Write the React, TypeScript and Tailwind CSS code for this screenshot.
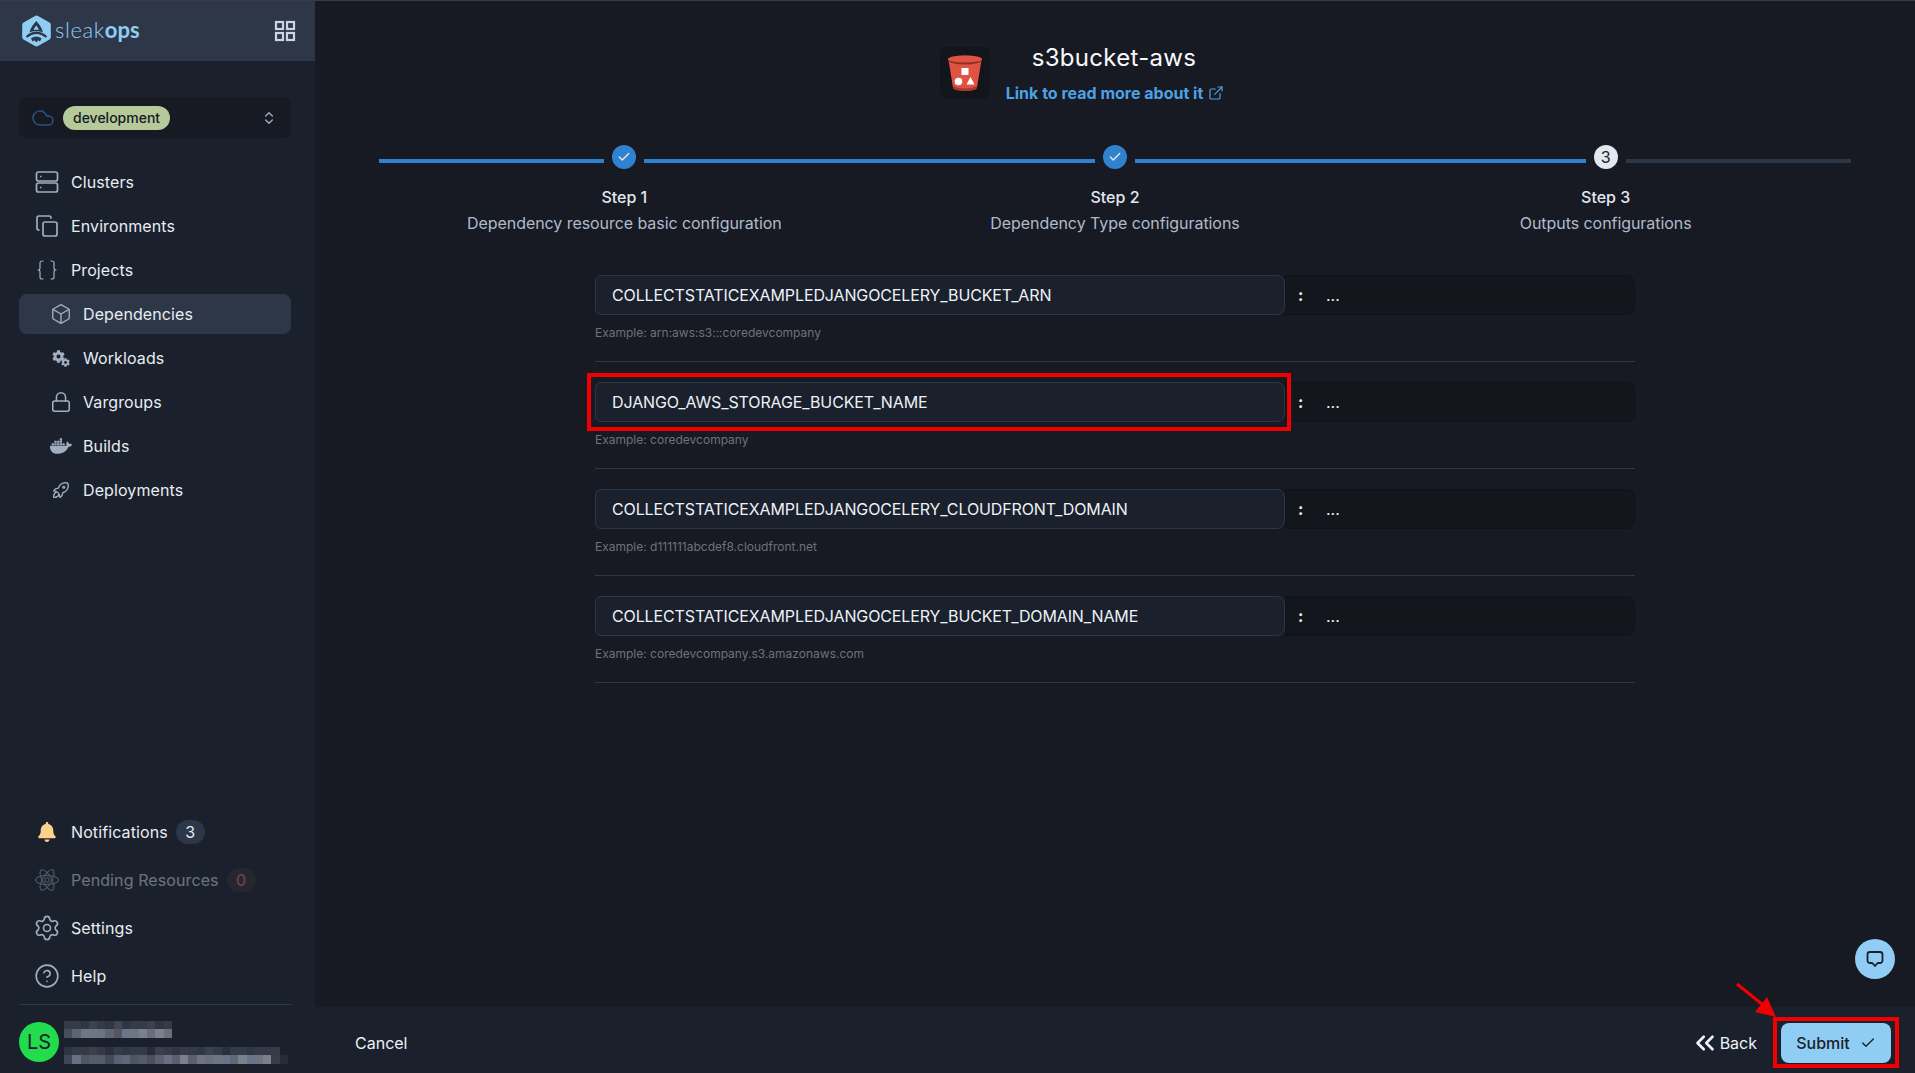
import { Cloud, ChevronsUpDown, Copy, Braces, Box, Lock, Settings, CircleHelp, ExternalLink, Check, ChevronsLeft } from "lucide-react";
import { FaCog, FaDocker, FaBell } from "react-icons/fa";
import { TbRocket } from "react-icons/tb";

function ServerIcon() {
  return (
    <svg width="24" height="24" viewBox="0 0 24 24" fill="none" stroke="currentColor" strokeWidth="1.7">
      <rect x="1.5" y="2" width="21" height="9" rx="2" />
      <rect x="1.5" y="13" width="21" height="9" rx="2" />
      <path d="M5 6.5h1.5M5 17.5h1.5" />
    </svg>
  );
}

function GridIcon() {
  return (
    <svg width="22" height="22" viewBox="0 0 22 22" fill="none" stroke="#cbd5e0" strokeWidth="2.2">
      <rect x="2" y="2" width="7" height="7" />
      <rect x="13" y="2" width="7" height="7" />
      <rect x="2" y="13" width="7" height="7" />
      <rect x="13" y="13" width="7" height="7" />
    </svg>
  );
}

function AtomIcon() {
  return (
    <svg width="24" height="24" viewBox="0 0 24 24" fill="none" stroke="currentColor" strokeWidth="1.1">
      <ellipse cx="12" cy="12" rx="11.5" ry="4.5" />
      <ellipse cx="12" cy="12" rx="11.5" ry="4.5" transform="rotate(60 12 12)" />
      <ellipse cx="12" cy="12" rx="11.5" ry="4.5" transform="rotate(120 12 12)" />
      <circle cx="12" cy="12" r="2.2" />
    </svg>
  );
}

function Logo() {
  return (
    <svg width="29" height="32" viewBox="0 0 29 32">
      <path d="M14.5 0.5 Q15.3 0.5 16 1 L27.5 7.6 Q28.8 8.4 28.8 10 V22 Q28.8 23.6 27.5 24.4 L16 31 Q14.5 31.8 13 31 L1.5 24.4 Q0.2 23.6 0.2 22 V10 Q0.2 8.4 1.5 7.6 L13 1 Q13.7 0.5 14.5 0.5 Z" fill="#90cdf4" />
      <path d="M14.3 6 C16.5 8.5 20 12.5 21 17.5 C17 15.5 11.5 15.5 7.5 17.5 C8.5 12.5 12 8.5 14.3 6 Z" fill="#2b3648" />
      <path d="M14.3 10.5 C15.5 12 16.5 13.5 17 15 C15.5 14.6 13 14.6 11.5 15 C12 13.5 13 12 14.3 10.5 Z" fill="#90cdf4" />
      <path d="M4.5 22 Q14.3 13.5 24.5 22" fill="none" stroke="#2b3648" strokeWidth="2.2" />
      <path d="M9 23.2 Q14.3 20 19.5 23.2 L18 26.5 L16 25.3 L14.3 27.5 L12.5 25.3 L10.5 26.5 Z" fill="#2b3648" />
    </svg>
  );
}

function BucketIcon() {
  return (
    <svg width="34" height="36" viewBox="0 0 34 36">
      <path d="M0.5 5 L5 32.5 Q5.5 35.8 17 35.8 Q28.5 35.8 29 32.5 L33.5 5 Z" fill="#e05243" />
      <path d="M5 32.5 Q5.5 35.8 17 35.8 Q28.5 35.8 29 32.5 L29.3 30.5 Q25 33.5 17 33.5 Q9 33.5 4.7 30.5 Z" fill="#a8392c" />
      <ellipse cx="17" cy="5" rx="17" ry="4.5" fill="#8c3123" />
      <ellipse cx="17" cy="4" rx="17" ry="3.6" fill="#e05243" />
      <rect x="13.5" y="13" width="7" height="7" fill="#fff" />
      <circle cx="10.5" cy="26.5" r="3.8" fill="#fff" />
      <path d="M22.5 22 L26.5 29.5 H18.5 Z" fill="#fff" />
    </svg>
  );
}

function ChatIcon() {
  return (
    <svg width="18" height="18" viewBox="0 0 18 18" fill="none" stroke="#1a202c" strokeWidth="1.8" strokeLinejoin="round">
      <path d="M4 2h10a2.5 2.5 0 0 1 2.5 2.5v6a2.5 2.5 0 0 1-2.5 2.5h-2.3L9 16l-2.7-3H4a2.5 2.5 0 0 1-2.5-2.5v-6A2.5 2.5 0 0 1 4 2Z" />
    </svg>
  );
}

function GearsIcon() {
  return (
    <span className="relative block w-[18px] h-[17px]">
      <FaCog size={13} className="absolute left-0 top-0" />
      <FaCog size={9} className="absolute right-0 bottom-0" />
    </span>
  );
}

function NavRow({ icon, label, active, sub }: { icon: React.ReactNode; label: string; active?: boolean; sub?: boolean }) {
  return (
    <div className="h-[44px] flex items-center">
      <div className={`h-10 w-full flex items-center rounded-lg ${sub ? "pl-[31px] gap-[11px]" : "pl-[16px] gap-[12px]"} ${active ? "bg-[#2d3748]" : ""}`}>
        <span className={`flex items-center justify-center text-[#a0aec0] ${sub ? "w-[22px] h-[22px]" : "w-6 h-6"}`}>{icon}</span>
        <span className="text-base tracking-[0.1px] text-[#e8edf3]">{label}</span>
      </div>
    </div>
  );
}

function BottomRow({ icon, label, badge, muted, iconClass }: { icon: React.ReactNode; label: string; badge?: string; muted?: boolean; iconClass?: string }) {
  return (
    <div className={`h-[48px] flex items-center pl-[16px] gap-[12px] ${muted ? "opacity-40" : ""}`}>
      <span className={`w-6 h-6 flex items-center justify-center ${iconClass ?? "text-[#a0aec0]"}`}>{icon}</span>
      <span className="text-base tracking-[0.1px] text-[#e8edf3]">{label}</span>
      {badge && (
        <span className={`-ml-[4px] h-6 w-[29px] rounded-full flex items-center justify-center text-base ${muted ? "text-[#fc8181] bg-[#3a2f38]" : "text-[#e2e8f0] bg-[#2d3748]"}`}>
          {badge}
        </span>
      )}
    </div>
  );
}

const mosaic: string[][] = [
  ["#343a47", "#343a47", "#2f3542", "#3b4250", "#343a47", "#2f3542", "#3f4654", "#2f3542", "#343a47", "#343a47", "#3a404e", "#2f3542", "#343a47"],
  ["#474d5a", "#5c6472", "#707682", "#707682", "#6a7482", "#5e6674", "#55565f", "#6b7686", "#6b7686", "#7b818c", "#686e7a", "#7b818c", "#686e7a"],
  ["#2e3442", "#343a47", "#343a47", "#3b4048", "#343a47", "#2a3040", "#343a47", "#2f3745", "#343a47", "#343a47", "#262c38", "#3a404e", "#343a47", "#2f3542", "#363c4a", "#343a47", "#2f3745", "#3a4250", "#343a47", "#2a3040", "#343a47", "#343a47", "#2f3542", "#343a47", "#343a47", "#343a47"],
  ["#3f4553", "#667080", "#4f5563", "#555b69", "#555b69", "#424a5a", "#596070", "#5c6878", "#4f5563", "#555b69", "#4a505e", "#5a6070", "#6a7080", "#5a6070", "#7a808c", "#5a6070", "#6f7580", "#6a7080", "#6f7580", "#68748a", "#5e6878", "#7a808c", "#68748a", "#6f7580", "#7a808c", "#363c48", "#272c38"],
];

function Blurred() {
  return (
    <div className="flex flex-col">
      {mosaic.map((row, i) => (
        <div key={i} className={`flex h-[8.5px] ${i === 2 ? "mt-[9px]" : ""}`}>
          {row.map((c, j) => (
            <div key={j} className="w-[8.3px] h-full" style={{ background: c }} />
          ))}
        </div>
      ))}
    </div>
  );
}

function StepCol({ n, desc, state, lineAfter }: { n: number; desc: string; state: "done" | "current"; lineAfter: string }) {
  return (
    <div className="flex-1 flex flex-col items-center">
      <div className="w-full flex items-start gap-2">
        <div className="flex-1 h-1 mt-[14px] bg-[#3182ce]" />
        {state === "done" ? (
          <div className="w-6 h-6 rounded-full bg-[#3182ce] flex items-center justify-center">
            <Check size={14} strokeWidth={2.4} className="text-[#e2e8f0]" />
          </div>
        ) : (
          <div className="w-6 h-6 rounded-full bg-[#e2e8f0] flex items-center justify-center text-base text-[#1a202c]">{n}</div>
        )}
        <div className={`flex-1 h-1 mt-[14px] ${lineAfter}`} />
      </div>
      <div className="mt-[16px] text-base font-medium text-[#e2e8f0] leading-6">Step {n}</div>
      <div className="mt-[2px] text-base tracking-[-0.06px] text-[#b0bbc9] leading-6">{desc}</div>
    </div>
  );
}

function FormRow({ name, example }: { name: string; example: string }) {
  return (
    <div className="mb-[20px] border-b border-[#2d3748] pb-[19px]">
      <div className="flex h-10">
        <div className="w-[690px] h-10 bg-[#1a202c] border border-[#2d3748] rounded-l-md rounded-r-lg flex items-center pl-4 text-base tracking-[-0.12px] text-[#edf2f7]">{name}</div>
        <div className="flex-1 h-10 bg-[#14161e] border border-[#11131a] rounded-r-lg flex items-center pl-[12px] text-[#edf2f7] text-base">
          <span className="font-bold w-[28px]">:</span>
          <span>...</span>
        </div>
      </div>
      <div className="mt-[9px] text-xs leading-[18px] text-[#6f7278]">{example}</div>
    </div>
  );
}

export default function App() {
  return (
    <div className="relative h-screen w-full overflow-hidden flex bg-[#171923] border-t border-[#3a3a40] font-['Inter',sans-serif]">
      <aside className="w-[315px] shrink-0 bg-[#1a202c] flex flex-col">
        <div className="h-[60px] bg-[#2d3748] flex items-center justify-between pl-[22px] pr-[19px]">
          <div className="flex items-center gap-[4px]">
            <Logo />
            <span className="text-[22px] leading-none text-[#90cdf4] font-['Lato',sans-serif] font-light -mt-[3px]">
              <span className="tracking-[0.6px]">sleak</span>
              <span className="font-bold">ops</span>
            </span>
          </div>
          <GridIcon />
        </div>

        <div className="pl-[19px] pr-[24px] pt-[36px] flex-1 flex flex-col">
          <div className="h-[41px] rounded-lg bg-[#171923] flex items-center pl-[12px] pr-[12px]">
            <Cloud size={24} strokeWidth={1.5} className="text-[#2c5282]" />
            <span className="ml-[8px] h-6 px-[10px] rounded-full bg-[#b5c99a] text-[#171923] text-sm font-medium flex items-center">development</span>
            <ChevronsUpDown size={16} className="ml-auto mr-[2px] text-[#a0aec0]" />
          </div>

          <nav className="mt-[22px] flex flex-col">
            <NavRow icon={<ServerIcon />} label="Clusters" />
            <NavRow icon={<Copy size={26} strokeWidth={1.7} />} label="Environments" />
            <NavRow icon={<Braces size={24} strokeWidth={1.2} />} label="Projects" />
            <NavRow sub active icon={<Box size={22} strokeWidth={1.5} />} label="Dependencies" />
            <NavRow sub icon={<GearsIcon />} label="Workloads" />
            <NavRow sub icon={<Lock size={22} strokeWidth={1.7} />} label="Vargroups" />
            <NavRow sub icon={<FaDocker size={22} />} label="Builds" />
            <NavRow sub icon={<TbRocket size={22} strokeWidth={1.5} />} label="Deployments" />
          </nav>

          <div className="mt-auto flex flex-col">
            <BottomRow icon={<FaBell size={20} />} iconClass="text-[#fbd38d]" label="Notifications" badge="3" />
            <BottomRow muted icon={<AtomIcon />} label="Pending Resources" badge="0" />
            <BottomRow icon={<Settings size={28} strokeWidth={1.4} className="shrink-0" />} label="Settings" />
            <BottomRow icon={<CircleHelp size={26} strokeWidth={1.5} className="shrink-0" />} label="Help" />
            <div className="mt-[4px] border-t border-[#2d3748]" />
            <div className="h-[68px] pt-[6px] flex items-center gap-[5px]">
              <div className="w-10 h-10 rounded-full bg-[#22dc4d] flex items-center justify-center text-[20px] text-[#1a202c] shrink-0">LS</div>
              <Blurred />
            </div>
          </div>
        </div>
      </aside>

      <main className="flex-1 flex flex-col min-w-0">
        <div className="flex-1 flex flex-col">
          <div className="pt-[46px] flex justify-center items-start gap-4">
            <div className="w-[50px] h-[52px] rounded-lg bg-[#13151c] flex items-center justify-center">
              <BucketIcon />
            </div>
            <div className="flex flex-col items-center">
              <div className="text-[24px] leading-[24px] tracking-[0.3px] text-[#f7fafc] -mt-[1px] mr-[2px]">s3bucket-aws</div>
              <div className="mt-[11px] flex items-center gap-[5px] text-base font-bold leading-6 text-[#4ba3e3]">
                Link to read more about it
                <ExternalLink size={16} strokeWidth={1.8} />
              </div>
            </div>
            <div className="w-[50px]" />
          </div>

          <div className="mx-[64px] mt-[40px] flex">
            <StepCol n={1} desc="Dependency resource basic configuration" state="done" lineAfter="bg-[#3182ce]" />
            <StepCol n={2} desc="Dependency Type configurations" state="done" lineAfter="bg-[#3182ce]" />
            <StepCol n={3} desc="Outputs configurations" state="current" lineAfter="bg-[#2d3748]" />
          </div>

          <div className="w-[1040px] mx-auto mt-[40px]">
            <FormRow name="COLLECTSTATICEXAMPLEDJANGOCELERY_BUCKET_ARN" example="Example: arn:aws:s3:::coredevcompany" />
            <FormRow name="DJANGO_AWS_STORAGE_BUCKET_NAME" example="Example: coredevcompany" />
            <FormRow name="COLLECTSTATICEXAMPLEDJANGOCELERY_CLOUDFRONT_DOMAIN" example="Example: d111111abcdef8.cloudfront.net" />
            <FormRow name="COLLECTSTATICEXAMPLEDJANGOCELERY_BUCKET_DOMAIN_NAME" example="Example: coredevcompany.s3.amazonaws.com" />
          </div>
        </div>

        <footer className="h-[66px] pt-[6px] bg-[#1a202c] flex items-center pl-[40px] pr-[24px]">
          <span className="text-base text-[#edf2f7]">Cancel</span>
          <div className="ml-auto flex items-center">
            <ChevronsLeft size={30} strokeWidth={2.1} className="text-[#edf2f7] -ml-[8px]" />
            <span className="text-base text-[#edf2f7]">Back</span>
            <button className="ml-[24px] w-[110px] h-10 rounded-lg bg-[#90cdf4] flex items-center justify-center gap-[10px] text-base font-medium text-[#1a202c]">
              Submit
              <Check size={16} strokeWidth={2} />
            </button>
          </div>
        </footer>
      </main>

      <div className="absolute left-[1855px] top-[938px] w-10 h-10 rounded-full bg-[#90cdf4] flex items-center justify-center">
        <ChatIcon />
      </div>
      <div className="absolute left-[587px] top-[372px] w-[704px] h-[58px] border-4 border-[#f00000]" />
      <div className="absolute left-[1773px] top-[1016px] w-[126px] h-[51px] border-4 border-[#f00000]" />
      <svg className="absolute left-[1730px] top-[978px]" width="50" height="45" viewBox="0 0 50 45">
        <path d="M7 5 L33 26" stroke="#f00000" strokeWidth="3" />
        <path d="M46 38 L25 33 L37 18 Z" fill="#f00000" />
      </svg>
    </div>
  );
}
